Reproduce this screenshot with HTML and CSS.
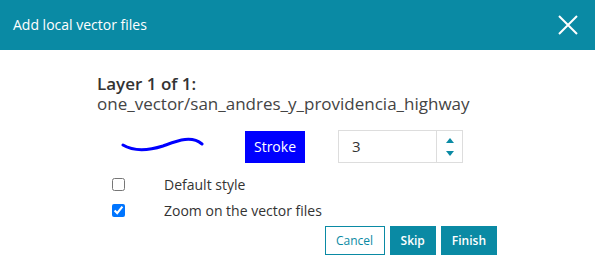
FILE: index.html
```html
<!DOCTYPE html>
<html>
<head>
<meta charset="utf-8">
<link rel="stylesheet" href="styles.css">
</head>
<body>
<div class="dialog">
  <header class="header">
    <span class="title">Add local vector files</span>
    <svg class="close" width="20" height="20" viewBox="0 0 20 20"><path d="M1 1 L19 19 M19 1 L1 19" stroke="#fff" stroke-width="2" fill="none"/></svg>
  </header>
  <main class="content">
    <div class="layer-title">Layer 1 of 1:</div>
    <div class="layer-path">one_vector/san_andres_y_providencia_highway</div>
    <div class="style-row">
      <svg class="wave" width="84" height="18" viewBox="0 0 84 18"><path d="M2 9 C 12 15, 26 15, 42 10 C 56 5, 70 -1, 81 8" stroke="#0000ff" stroke-width="3" fill="none" stroke-linecap="round"/></svg>
      <button class="stroke-btn">Stroke</button>
      <div class="spinner">
        <span class="spin-value">3</span>
        <div class="spin-arrows">
          <svg width="10" height="6" viewBox="0 0 10 6"><path d="M1 6 L5 1 L9 6 Z" fill="#0a8aa4"/></svg>
          <svg width="10" height="6" viewBox="0 0 10 6"><path d="M1 0 L5 5 L9 0 Z" fill="#0a8aa4"/></svg>
        </div>
      </div>
    </div>
    <label class="check-row"><input type="checkbox"><span class="check-label">Default style</span></label>
    <label class="check-row"><input type="checkbox" checked><span class="check-label">Zoom on the vector files</span></label>
    <div class="actions">
      <button class="btn btn-outline">Cancel</button>
      <button class="btn btn-fill">Skip</button>
      <button class="btn btn-fill">Finish</button>
    </div>
  </main>
</div>
</body>
</html>
```
FILE: styles.css
```css
* { box-sizing: border-box; }
html, body { margin: 0; padding: 0; background: #fff; }
body { font-family: "Open Sans", sans-serif; width: 595px; height: 270px; overflow: hidden; }
.header {
  height: 50px;
  background: #0a8aa4;
  display: flex;
  align-items: center;
  justify-content: space-between;
  padding: 0 17px 0 13px;
}
.title { color: #fff; font-size: 14px; line-height: 20px; }
.close { display: block; }
.content { padding: 24px 98px 0 97px; }
.layer-title { font-size: 17px; font-weight: 600; color: #333; line-height: 20px; }
.layer-path { font-size: 17px; color: #444; line-height: 20px; }
.style-row {
  display: flex;
  align-items: center;
  margin-top: 16px;
  height: 33px;
}
.wave { margin-left: 24px; margin-top: -3px; }
.stroke-btn {
  margin-left: 40px;
  width: 60px;
  height: 32px;
  background: #0000ff;
  color: #fff;
  border: none;
  font-family: "Open Sans", sans-serif;
  font-size: 14px;
  font-weight: 500;
  padding: 0;
}
.spinner {
  margin-left: 33px;
  width: 125px;
  height: 33px;
  border: 1px solid #ddd;
  display: flex;
}
.spin-value { flex: 1; font-size: 15px; color: #333; padding-left: 13px; line-height: 31px; }
.spin-arrows {
  width: 26px;
  border-left: 1px solid #ddd;
  display: flex;
  flex-direction: column;
  align-items: center;
  justify-content: center;
  gap: 8px;
}
.spin-arrows svg { display: block; }
.check-row {
  display: flex;
  align-items: center;
  height: 26px;
  padding-left: 11px;
}
.check-row:first-of-type { margin-top: 8px; }
.check-row input { margin: 0 0 0 4px; width: 13px; height: 13px; }
.check-label { margin-left: 39px; font-size: 14px; font-weight: 500; color: #333; }
.actions {
  display: flex;
  justify-content: flex-end;
  gap: 5px;
  margin-top: 3px;
}
.btn {
  height: 29px;
  font-family: "Open Sans", sans-serif;
  font-size: 12px;
  font-weight: 600;
  padding: 0 10px;
  border: 1px solid #0a8aa4;
}
.btn-outline { background: #fff; color: #0a8aa4; font-weight: 400; width: 60px; }
.btn-fill { background: #0a8aa4; color: #fff; }
```
